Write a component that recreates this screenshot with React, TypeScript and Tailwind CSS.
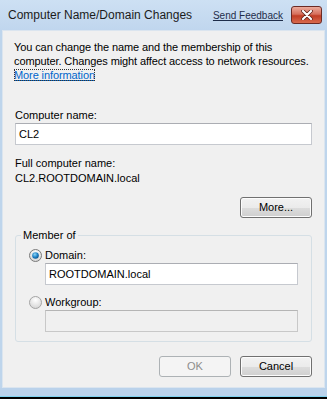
const font = { fontFamily: '"Liberation Sans", Arial, sans-serif' };

const Radio = ({ checked }: { checked?: boolean }) => (
  <svg width="13" height="13" viewBox="0 0 13 13" className="shrink-0">
    <defs>
      <radialGradient id="rOuter" cx="50%" cy="30%" r="70%">
        <stop offset="0%" stopColor="#ffffff" />
        <stop offset="100%" stopColor="#d4d4d4" />
      </radialGradient>
      <radialGradient id="rDot" cx="40%" cy="35%" r="70%">
        <stop offset="0%" stopColor="#8fd6f6" />
        <stop offset="60%" stopColor="#1c7fc4" />
        <stop offset="100%" stopColor="#0b4f86" />
      </radialGradient>
    </defs>
    <circle cx="6.5" cy="6.5" r="6" fill="url(#rOuter)" stroke={checked ? '#7a7a7a' : '#a4a4a4'} />
    {checked && <circle cx="6.5" cy="6.5" r="3.3" fill="url(#rDot)" />}
  </svg>
);

const Button = ({ label, disabled }: { label: string; disabled?: boolean }) => (
  <div
    className={
      disabled
        ? 'w-[72px] h-[21px] rounded-[3px] border border-[#adb2b5] bg-[#f4f4f4] text-[#8d8d8d] flex items-center justify-center'
        : 'w-[72px] h-[21px] rounded-[3px] border border-[#707070] bg-[linear-gradient(#f2f2f2_0%,#ebebeb_50%,#dddddd_50%,#cfcfcf_100%)] text-[#000] flex items-center justify-center shadow-[inset_0_0_0_1px_#fcfcfc]'
    }
  >
    {label}
  </div>
);

export default function App() {
  return (
    <div className="w-[327px] h-[399px] flex flex-col bg-[#bed5ec] whitespace-nowrap" style={font}>
      <div className="h-[30px] flex items-center pl-[8px] pr-[5px] bg-[linear-gradient(#cde0f3,#c0d6ee)]">
        <span className="text-[12px] text-[#1b1b1b]">Computer Name/Domain Changes</span>
        <span className="ml-auto mr-[8px] text-[10px] underline text-[#1e2d4a]">Send Feedback</span>
        <div className="w-[31px] h-[18px] rounded-[3px] border border-[#6b2a24] bg-[linear-gradient(#ecab9c_0%,#d66f5c_45%,#c13d25_55%,#d86a4e_100%)] flex items-center justify-center">
          <svg width="12" height="10" viewBox="0 0 12 10">
            <path d="M2 1 L10 9 M10 1 L2 9" stroke="#5a1d16" strokeWidth="3.6" strokeLinecap="round" />
            <path d="M2 1 L10 9 M10 1 L2 9" stroke="#ffffff" strokeWidth="2.2" strokeLinecap="round" />
          </svg>
        </div>
      </div>

      <div className="mx-[2px] flex-1 bg-[#f0f0f0] border border-[#dbe5ef] flex flex-col pl-[11px] pr-[12px] text-[11px] text-[#000]">
        <div className="pt-[9px] leading-[14px] tracking-[-0.1px]">
          <div>You can change the name and the membership of this</div>
          <div>computer. Changes might affect access to network resources.</div>
          <span className="text-[#0066cc] underline outline-1 outline-dotted outline-[#333] -outline-offset-1">More information</span>
        </div>

        <div className="pl-[1px] flex flex-col">
          <div className="mt-[26px] leading-[14px]">Computer name:</div>
          <div className="mt-[1px] h-[22px] bg-white border border-[#c6c9cf] border-t-[#abadb3] flex items-center pl-[3px]">CL2</div>

          <div className="mt-[11px] leading-[14px]">Full computer name:</div>
          <div className="mt-[1px] leading-[14px]">CL2.ROOTDOMAIN.local</div>

          <div className="mt-[12px] flex justify-end">
            <Button label="More..." />
          </div>

          <fieldset className="mt-[10px] border border-[#d5dfe5] rounded-[3px] pl-[13px] pr-[13px] pb-[9px]">
            <legend className="-ml-[8px] px-[2px] leading-[14px]">Member of</legend>
            <div className="mt-[6px] flex items-center gap-[3px] h-[14px]">
              <Radio checked />
              <span>Domain:</span>
            </div>
            <div className="mt-[1px] ml-[16px] h-[22px] bg-white border border-[#c6c9cf] border-t-[#abadb3] flex items-center pl-[3px]">ROOTDOMAIN.local</div>
            <div className="mt-[10px] flex items-center gap-[3px] h-[14px]">
              <Radio />
              <span>Workgroup:</span>
            </div>
            <div className="mt-[1px] ml-[16px] h-[22px] bg-[#f0f0f0] border border-[#c8c8c8] border-t-[#b5b5b5]" />
          </fieldset>

          <div className="mt-[14px] flex justify-end gap-[9px]">
            <Button label="OK" disabled />
            <Button label="Cancel" />
          </div>
        </div>
      </div>

      <div className="h-[8px] bg-[#bad2eb]" />
      <div className="h-[1px] bg-[#7fd3f0]" />
      <div className="h-[2px] bg-black" />
    </div>
  );
}
